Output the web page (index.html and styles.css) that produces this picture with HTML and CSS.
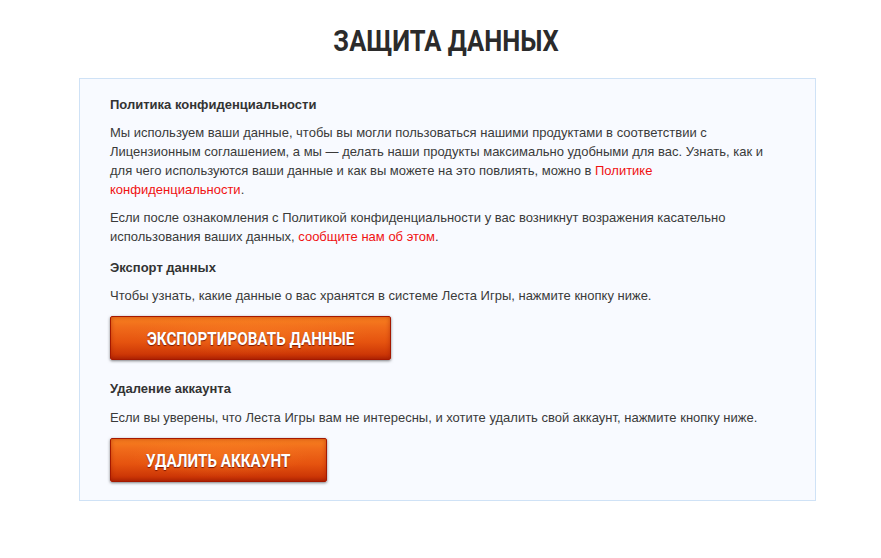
FILE: index.html
```html
<!DOCTYPE html>
<html lang="ru">
<head>
<meta charset="utf-8">
<title>Защита данных</title>
<link rel="stylesheet" href="styles.css">
</head>
<body>
<h1 class="title"><span class="cond">ЗАЩИТА ДАННЫХ</span></h1>
<section class="box">
  <h2 class="sub">Политика конфиденциальности</h2>
  <p class="txt">Мы используем ваши данные, чтобы вы могли пользоваться нашими продуктами в соответствии с Лицензионным соглашением, а мы — делать наши продукты максимально удобными для вас. Узнать, как и для чего используются ваши данные и как вы можете на это повлиять, можно в <a class="lnk" href="#">Политике конфиденциальности</a>.</p>
  <p class="txt">Если после ознакомления с Политикой конфиденциальности у вас возникнут возражения касательно использования ваших данных, <a class="lnk" href="#">сообщите нам об этом</a>.</p>
  <h2 class="sub sub-gap">Экспорт данных</h2>
  <p class="txt">Чтобы узнать, какие данные о вас хранятся в системе Леста Игры, нажмите кнопку ниже.</p>
  <a class="btn btn-export" href="#"><span class="bcond">ЭКСПОРТИРОВАТЬ ДАННЫЕ</span></a>
  <h2 class="sub sub-gap2">Удаление аккаунта</h2>
  <p class="txt txt-last">Если вы уверены, что Леста Игры вам не интересны, и хотите удалить свой аккаунт, нажмите кнопку ниже.</p>
  <a class="btn btn-delete" href="#"><span class="bcond">УДАЛИТЬ АККАУНТ</span></a>
</section>
</body>
</html>
```
FILE: styles.css
```css
html, body {
  margin: 0;
  padding: 0;
  background: #ffffff;
}
body {
  font-family: "Liberation Sans", Arial, sans-serif;
  color: #333333;
  width: 881px;
}
.title {
  margin: 24px 0 20px;
  padding: 0 0 0 11px;
  text-align: center;
  font-family: Roboto, "Liberation Sans", sans-serif;
  font-weight: 700;
  font-size: 29px;
  line-height: 34px;
  color: #2b2b2b;
}
.cond {
  display: inline-block;
  transform: scaleX(0.88);
}
.bcond {
  display: inline-block;
  transform: scaleX(0.8);
}
.box {
  margin: 0 0 0 79px;
  width: 674px;
  padding: 16px 31px 18px 30px;
  background: #f8faff;
  border: 1px solid #cfe2f6;
  display: flex;
  flex-direction: column;
  align-items: flex-start;
}
.sub {
  margin: 0;
  font-size: 13px;
  line-height: 19px;
  font-weight: 700;
  color: #333333;
}
.sub-gap { margin-top: 12px; }
.sub-gap2 { margin-top: 19px; }
.txt {
  margin: 9px 0 0;
  font-size: 13px;
  line-height: 19px;
  color: #3a3a3a;
}
.txt-last { margin-top: 10px; }
.lnk {
  color: #f01212;
  text-decoration: none;
}
.btn {
  margin-top: 11px;
  height: 44px;
  box-sizing: border-box;
  display: flex;
  align-items: center;
  justify-content: center;
  text-decoration: none;
  border: 1px solid #a51800;
  border-radius: 2px;
  background:
    radial-gradient(ellipse at 50% 40%, rgba(255,140,40,0.35) 0%, rgba(255,140,40,0) 60%),
    linear-gradient(180deg, #f7801f 0%, #f06a1a 25%, #e5530f 60%, #cc3606 90%, #b52804 100%);
  box-shadow: 0 1px 3px rgba(0,0,0,0.5), inset 0 0 4px rgba(150,20,0,0.5);
  font-family: Roboto, "Liberation Sans", sans-serif;
  font-weight: 700;
  font-size: 19px;
  color: #ffffff;
  text-shadow: 0 1px 1px rgba(110,15,0,0.9);
  white-space: nowrap;
}
.btn-export { width: 281px; }
.btn-delete { width: 217px; }
```
